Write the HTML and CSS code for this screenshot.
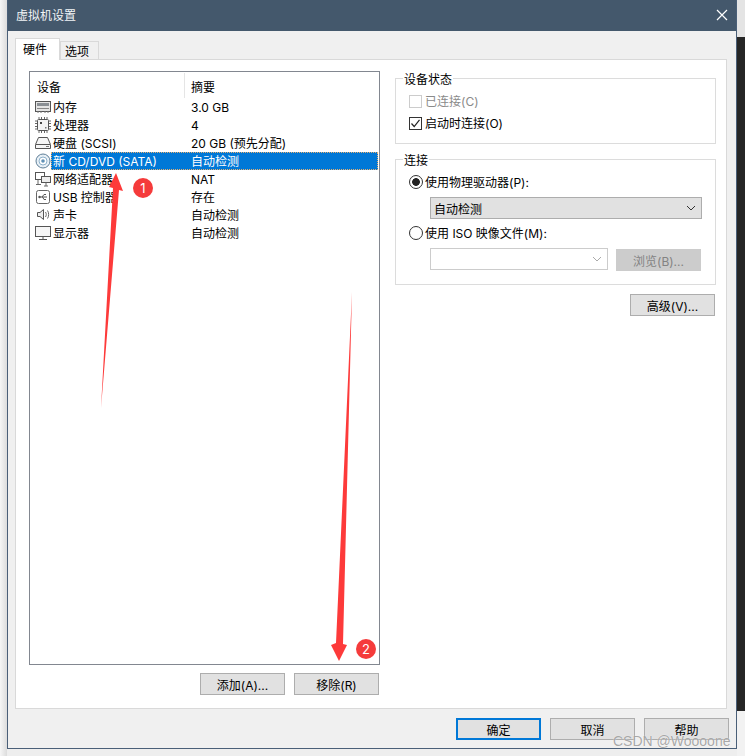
FILE: index.html
```html
<!DOCTYPE html>
<html lang="zh-CN">
<head>
<meta charset="UTF-8">
<title>虚拟机设置</title>
<link rel="stylesheet" href="styles.css">
</head>
<body>
  <div class="shadow_left"></div>

  <div class="window">
    <div class="title_bar">
      <span>虚拟机设置</span>
      <svg class="close_icon" width="14" height="14" viewBox="0 0 14 14"><path d="M2 2 L12 12 M12 2 L2 12" stroke="#fff" stroke-width="1.2" fill="none"/></svg>
    </div>

    <div class="tabs">
      <div class="tab tab_active">硬件</div>
      <div class="tab">选项</div>
    </div>

    <div class="panel">
      <div class="left_col">
        <div class="list_box">
          <div class="list_head">
            <div class="head_name">设备</div>
            <div class="head_summary">摘要</div>
          </div>

          <div class="row">
            <svg class="row_icon" width="16" height="16" viewBox="0 0 16 16"><rect x="0.5" y="2.5" width="15" height="10" fill="#e4e4e4" stroke="#555"/><rect x="2" y="4" width="12" height="3" fill="#8a8f94"/><path d="M2 9.5H14" stroke="#888"/><path d="M3 12V14M6 12V14M10 12V14M13 12V14" stroke="#777"/></svg>
            <div class="cells"><div class="name">内存</div><div class="summary">3.0 GB</div></div>
          </div>
          <div class="row">
            <svg class="row_icon" width="16" height="16" viewBox="0 0 16 16"><rect x="2.5" y="2.5" width="11" height="11" rx="1" fill="#f4f4f4" stroke="#555"/><path d="M4 0V2M6.500 0V2M9.500 0V2M12 0V2M4 14V16M6.500 14V16M9.500 14V16M12 14V16M0 4H2M0 6.500H2M0 9.500H2M0 12H2M14 4H16M14 6.500H16M14 9.500H16M14 12H16" stroke="#666"/><rect x="5" y="5" width="2" height="2" fill="#444"/><rect x="10" y="10" width="1.500" height="1.500" fill="#777"/></svg>
            <div class="cells"><div class="name">处理器</div><div class="summary">4</div></div>
          </div>
          <div class="row">
            <svg class="row_icon" width="16" height="16" viewBox="0 0 16 16"><path d="M3.500 2.500H12.500L15.500 9.500V13.500H0.500V9.500Z" fill="#f6f6f6" stroke="#555"/><path d="M1 9.500H15" stroke="#555"/><path d="M11 11.500H14" stroke="#777"/></svg>
            <div class="cells"><div class="name">硬盘 (SCSI)</div><div class="summary">20 GB (预先分配)</div></div>
          </div>
          <div class="row row_selected">
            <svg class="row_icon" width="16" height="16" viewBox="0 0 16 16"><circle cx="8" cy="8" r="7" fill="#e8f0f6" stroke="#5f7f98"/><circle cx="8" cy="8" r="4" fill="#fff" stroke="#8fb2cc"/><circle cx="8" cy="8" r="1.800" fill="#5f90b5"/></svg>
            <div class="cells"><div class="name">新 CD/DVD (SATA)</div><div class="summary">自动检测</div></div>
          </div>
          <div class="row">
            <svg class="row_icon" width="16" height="16" viewBox="0 0 16 16"><rect x="0.500" y="1.500" width="9" height="7" fill="#fff" stroke="#555"/><rect x="6.500" y="5.500" width="9" height="6" fill="#eee" stroke="#555"/><path d="M3 8.500V13.500H1M3 13.500H6M11 11.500V15M9 15H13" stroke="#666" fill="none"/></svg>
            <div class="cells"><div class="name">网络适配器</div><div class="summary">NAT</div></div>
          </div>
          <div class="row">
            <svg class="row_icon" width="16" height="16" viewBox="0 0 16 16"><rect x="1.500" y="1.500" width="13" height="13" rx="2" fill="#fff" stroke="#666"/><path d="M4 8H12M7 8L9 5.500H11M7.500 8L9 10.500H11" stroke="#555" fill="none"/><circle cx="4.500" cy="8" r="1.200" fill="#555"/></svg>
            <div class="cells"><div class="name">USB 控制器</div><div class="summary">存在</div></div>
          </div>
          <div class="row">
            <svg class="row_icon" width="16" height="16" viewBox="0 0 16 16"><path d="M2.500 5.500H5L8.500 2.500V12.500L5 9.500H2.500Z" fill="#eee" stroke="#555"/><path d="M10.500 5C11.500 6.500 11.500 8.500 10.500 10M12.500 3.500C14 5.500 14 9.500 12.500 11.500" stroke="#666" fill="none"/></svg>
            <div class="cells"><div class="name">声卡</div><div class="summary">自动检测</div></div>
          </div>
          <div class="row">
            <svg class="row_icon" width="16" height="16" viewBox="0 0 16 16"><rect x="0.500" y="1.500" width="15" height="10" fill="#f6f6f6" stroke="#555"/><path d="M8 12V14M4 14.500H12" stroke="#555"/></svg>
            <div class="cells"><div class="name">显示器</div><div class="summary">自动检测</div></div>
          </div>
        </div>

        <div class="list_buttons">
          <div class="btn">添加(A)...</div>
          <div class="btn">移除(R)</div>
        </div>
      </div>

      <div class="right_col">
        <fieldset class="group group_status">
          <legend>设备状态</legend>
          <div class="check_line text_disabled"><span class="check check_disabled"></span><span class="label">已连接(C)</span></div>
          <div class="check_line">
            <span class="check"><svg width="11" height="11" viewBox="0 0 11 11"><path d="M1.500 5.500L4.200 8.500L9.500 1.800" stroke="#222" stroke-width="1.200" fill="none"/></svg></span><span class="label">启动时连接(O)</span>
          </div>
        </fieldset>

        <fieldset class="group group_connect">
          <legend>连接</legend>
          <div class="check_line"><span class="radio radio_on"></span><span class="label">使用物理驱动器(P):</span></div>
          <div class="combo combo_gray">
            <span class="combo_text">自动检测</span>
            <svg width="10" height="6" viewBox="0 0 10 6"><path d="M1 1L5 5L9 1" stroke="#333" fill="none"/></svg>
          </div>
          <div class="check_line line_iso"><span class="radio"></span><span class="label">使用 ISO 映像文件(M):</span></div>
          <div class="iso_line">
            <div class="combo combo_off">
              <span></span>
              <svg width="10" height="6" viewBox="0 0 10 6"><path d="M1 1L5 5L9 1" stroke="#aaa" fill="none"/></svg>
            </div>
            <div class="btn btn_off">浏览(B)...</div>
          </div>
        </fieldset>

        <div class="advanced_line"><div class="btn">高级(V)...</div></div>
      </div>
    </div>

    <div class="footer">
      <div class="btn btn_primary">确定</div>
      <div class="btn">取消</div>
      <div class="btn">帮助</div>
    </div>
  </div>

  <div class="side_right"></div>

  <!-- red arrows and numbers drawn on top of the screenshot -->
  <svg class="marks" width="745" height="756" viewBox="0 0 745 756">
    <polygon points="101,408 113,188 109,187 116,173 123,191 119,190" fill="#fd3a3a"/>
    <polygon points="352,292 343,644 347,645 339,661 331,645 336,643" fill="#fd3a3a"/>
    <circle cx="143" cy="188" r="10" fill="#f53b3b"/>
    <circle cx="366" cy="649" r="10" fill="#f53b3b"/>
    <text x="143" y="192.500" class="mark_num">1</text>
    <text x="366" y="653.500" class="mark_num">2</text>
  </svg>
  <div class="watermark">CSDN @Woooone</div>
</body>
</html>
```
FILE: styles.css
```css
* {
  box-sizing: border-box;
}

html, body {
  margin: 0;
  width: 745px;
  height: 756px;
  overflow: hidden;
}

body {
  display: flex;
  position: relative;
  font-family: Inter, "Noto Sans CJK SC", sans-serif;
  font-size: 12px;
  line-height: 16px;
  color: #000;
  background: #eeeeee;
}

.shadow_left {
  width: 7px;
  height: 756px;
  background: linear-gradient(to right, #f6f6f6, #dcdcdc);
}

.side_right {
  width: 8px;
  height: 756px;
  background: linear-gradient(to bottom, #e4e4e4 37px, #262626 37px, #262626 711px, #f2f2f2 711px);
}

.window {
  width: 730px;
  height: 749px;
  background: #f0f0f0;
  border-left: 1px solid #4a5f78;
  border-right: 1px solid #4a5f78;
  border-bottom: 1px solid #4a5f78;
}

.title_bar {
  height: 31px;
  padding: 8px 9px 0 8px;
  display: flex;
  justify-content: space-between;
  background: #44586c;
  color: #f2f5f7;
}

.close_icon {
  margin-right: -2px;
}

.tabs {
  display: flex;
  align-items: flex-end;
  height: 28px;
  padding: 0 0 0 7px;
}

.tab {
  width: 39px;
  height: 18px;
  padding: 2px 0 0 4px;
  border: 1px solid #d9d9d9;
  border-bottom: none;
  background: #f0f0f0;
}

.tab_active {
  width: 45px;
  height: 22px;
  margin-bottom: -1px;
  padding: 3px 0 0 7px;
  background: #fff;
  position: relative;
  z-index: 1;
}

.panel {
  margin-left: 7px;
  width: 712px;
  height: 650px;
  padding: 11px 10px 0 13px;
  display: flex;
  gap: 15px;
  background: #fff;
  border: 1px solid #d9d9d9;
}

.left_col {
  width: 351px;
}

.list_box {
  height: 594px;
  border: 1px solid #828790;
  background: #fff;
}

.list_head {
  display: flex;
  height: 26px;
  padding-top: 1px;
}

.head_name {
  width: 155px;
  padding: 7px 0 0 7px;
  border-right: 1px solid #e5e5e5;
}

.head_summary {
  padding: 7px 0 0 6px;
}

.row {
  display: flex;
  align-items: center;
  height: 18px;
  padding-left: 5px;
}

.row_icon {
  flex: none;
  width: 16px;
  height: 16px;
}

.cells {
  display: flex;
  width: 327px;
  height: 18px;
}

.name {
  width: 133px;
  padding: 2px 0 0 2px;
  white-space: nowrap;
}

.summary {
  padding: 2px 0 0 7px;
  white-space: nowrap;
}

.row_selected .cells {
  background: #0078d7;
  color: #fff;
  outline: 1px dotted #e8b070;
  outline-offset: -1px;
}

.list_buttons {
  display: flex;
  justify-content: flex-end;
  gap: 9px;
  margin-top: 8px;
  padding-right: 1px;
}

.btn {
  width: 85px;
  height: 22px;
  flex: none;
  text-align: center;
  line-height: 23px;
  background: #e1e1e1;
  border: 1px solid #adadad;
}

.btn_off {
  background: #cccccc;
  border-color: #cccccc;
  color: #838383;
}

.btn_primary {
  border: 2px solid #0078d7;
  line-height: 21px;
}

.right_col {
  width: 321px;
}

.group {
  margin: 0;
  padding: 0 0 0 13px;
  border: 1px solid #dcdcdc;
  min-width: 0;
}

.group legend {
  margin-left: -6px;
  padding: 2px 1px 0;
  line-height: 13px;
}

.group_status {
  height: 73px;
}

.group_connect {
  height: 133px;
  margin-top: 8px;
}

.check_line {
  display: flex;
  align-items: center;
  height: 16px;
  margin-top: 7px;
  white-space: nowrap;
}

.label {
  padding-top: 2px;
}

.group_status .check_line + .check_line {
  margin-top: 6px;
}

.text_disabled {
  color: #8a8a8a;
}

.check {
  width: 13px;
  height: 13px;
  margin-right: 3px;
  border: 1px solid #333;
  background: #fff;
  display: flex;
  align-items: center;
  justify-content: center;
}

.check_disabled {
  border-color: #cccccc;
}

.radio {
  width: 14px;
  height: 14px;
  margin-right: 2px;
  border: 1px solid #333;
  border-radius: 50%;
  background: #fff;
}

.radio_on {
  background: radial-gradient(circle, #222 0, #222 3.500px, #fff 4.200px);
}

.combo {
  display: flex;
  align-items: center;
  justify-content: space-between;
  height: 22px;
  padding: 0 5px 0 3px;
}

.combo_text {
  padding-top: 4px;
}

.combo_gray {
  width: 272px;
  margin: 7px 0 0 21px;
  background: #e1e1e1;
  border: 1px solid #adadad;
}

.combo_off {
  width: 178px;
  background: #fff;
  border: 1px solid #cccccc;
}

.line_iso {
  margin-top: 6px;
}

.iso_line {
  display: flex;
  align-items: flex-start;
  gap: 8px;
  margin: 7px 0 0 21px;
}

.iso_line .btn {
  margin-top: 1px;
}

.advanced_line {
  display: flex;
  justify-content: flex-end;
  margin-top: 9px;
  padding-right: 1px;
}

.footer {
  display: flex;
  justify-content: flex-end;
  gap: 9px;
  padding: 9px 7px 0 0;
}

.marks {
  position: absolute;
  left: 0;
  top: 0;
}

.mark_num {
  font-size: 13px;
  fill: #fff;
  text-anchor: middle;
}

.watermark {
  position: absolute;
  left: 613px;
  top: 733px;
  font-family: "Liberation Sans", sans-serif;
  font-size: 14px;
  color: rgba(130, 130, 130, 0.7);
  text-shadow: 0 0 1px #fff;
}
```
